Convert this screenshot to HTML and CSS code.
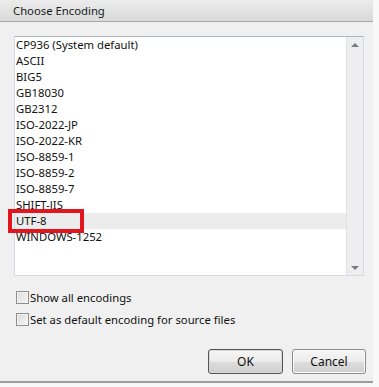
FILE: index.html
```html
<!DOCTYPE html>
<html lang="en">

<head>
    <meta charset="UTF-8">
    <meta name="viewport" content="width=device-width, initial-scale=1.0">
    <title>Choose Encoding</title>
    <link rel="stylesheet" href="styles.css">
</head>

<body>
    <div class="dialog">
        <div class="titlebar">Choose Encoding</div>

        <div class="content">
            <div class="listbox">
                <div class="items">
                    <div class="item">CP936 (System default)</div>
                    <div class="item">ASCII</div>
                    <div class="item">BIG5</div>
                    <div class="item">GB18030</div>
                    <div class="item">GB2312</div>
                    <div class="item">ISO-2022-JP</div>
                    <div class="item">ISO-2022-KR</div>
                    <div class="item">ISO-8859-1</div>
                    <div class="item">ISO-8859-2</div>
                    <div class="item">ISO-8859-7</div>
                    <div class="item">SHIFT-JIS</div>
                    <div class="item selected">UTF-8</div>
                    <div class="item">WINDOWS-1252</div>
                </div>
                <div class="scrollbar">
                    <span class="arrow up"></span>
                    <span class="arrow down"></span>
                </div>
            </div>

            <div class="options">
                <label class="option"><span class="checkbox"></span>Show all encodings</label>
                <label class="option"><span class="checkbox"></span>Set as default encoding for source files</label>
            </div>
        </div>

        <div class="buttons">
            <button class="btn default">OK</button>
            <button class="btn">Cancel</button>
        </div>

        <!-- annotation box drawn over the selected row -->
        <div class="highlight-box"></div>
    </div>
</body>

</html>
```

FILE: styles.css
```css
* {
    margin: 0;
    padding: 0;
    box-sizing: border-box;
}

body {
    font-family: 'Noto Sans', 'Segoe UI', sans-serif;
    font-size: 11.3px;
    color: #111;
    background: #f8f8f8;
}

.dialog {
    position: relative;
    width: 373px;
    height: 383px;
    background: #f0f0f0;
    border-bottom: 2px solid #9c9c9c;
    display: flex;
    flex-direction: column;
}

.titlebar {
    height: 22px;
    line-height: 21px;
    padding-left: 13px;
    background: linear-gradient(#ececec, #d9d9d9);
    border-bottom: 1px solid #a8a8a8;
    color: #1a1a1a;
}

.content {
    padding: 14px 9px 0 14px;
}

.listbox {
    width: 350px;
    height: 240px;
    display: flex;
    background: #fff;
    border: 1px solid #d6dbe3;
    border-top-color: #abb4c2;
}

.items {
    flex: 1;
}

.item {
    height: 16px;
    line-height: 16px;
    padding-left: 1px;
    white-space: nowrap;
}

.item.selected {
    background: #ececec;
}

.scrollbar {
    width: 17px;
    background: #eeeeee;
    border-left: 1px solid #e2e2e2;
    display: flex;
    flex-direction: column;
    justify-content: space-between;
    align-items: center;
    padding: 6px 0 5px;
}

.arrow {
    width: 0;
    height: 0;
    border-left: 4px solid transparent;
    border-right: 4px solid transparent;
}

.arrow.up {
    border-bottom: 4px solid #7a7a7a;
}

.arrow.down {
    border-top: 4px solid #7a7a7a;
}

.options {
    display: flex;
    flex-direction: column;
    gap: 9px;
    margin-top: 15px;
    padding-left: 2px;
}

.option {
    display: flex;
    align-items: center;
    height: 13px;
    line-height: 13px;
    white-space: nowrap;
}

.checkbox {
    width: 13px;
    height: 13px;
    margin-right: 1px;
    border: 1px solid #8e8f8f;
    background: linear-gradient(135deg, #dcdcdc, #f6f6f6);
    box-shadow: inset 0 0 0 1px #f4f4f4;
}

.buttons {
    display: flex;
    justify-content: flex-end;
    gap: 9px;
    margin-top: 23px;
    padding-right: 7px;
}

.btn {
    height: 25px;
    width: 74px;
    font-family: inherit;
    font-size: 12px;
    color: #111;
    background: linear-gradient(#f6f6f6 0%, #ebebeb 50%, #dddddd 51%, #cfcfcf 100%);
    border: 1px solid #8a8a8a;
    border-radius: 3px;
    box-shadow: inset 0 0 0 1px #fbfbfb;
}

.btn.default {
    width: 75px;
    border-color: #555;
    box-shadow: inset 0 0 0 1px #d8d8d8;
}

.highlight-box {
    position: absolute;
    left: 8px;
    top: 209px;
    width: 76px;
    height: 24px;
    border: 4px solid #e3151f;
}
```
